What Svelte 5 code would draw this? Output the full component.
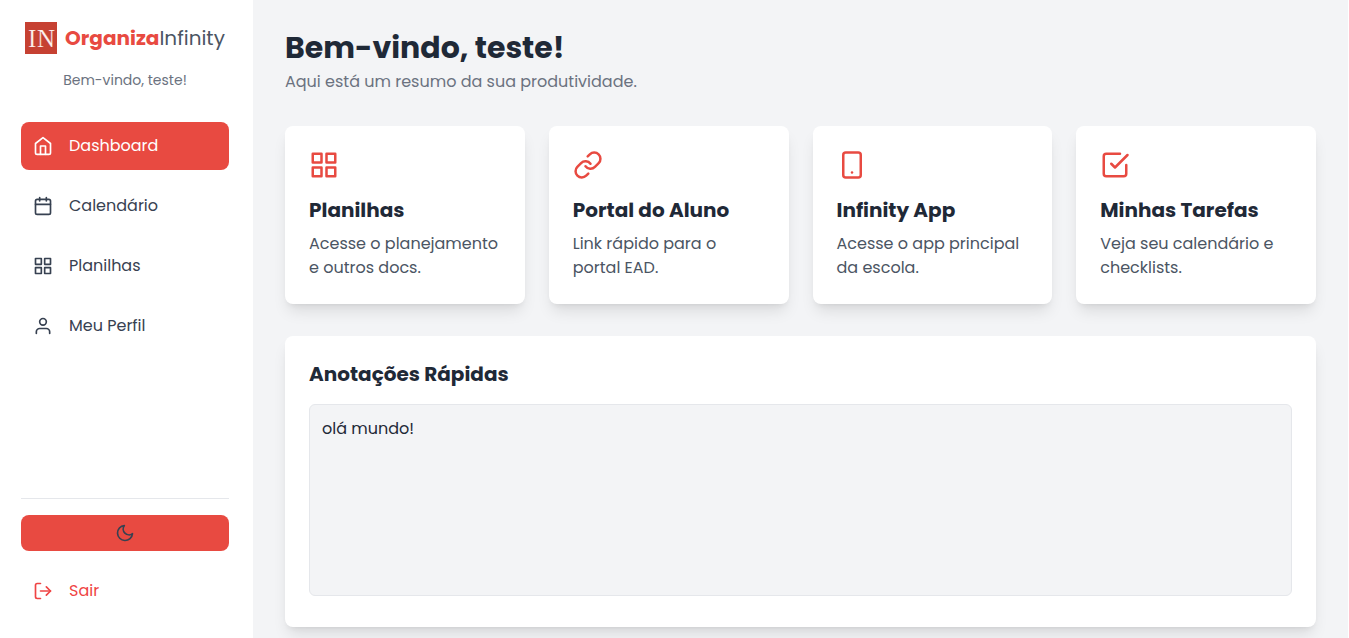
<script>
  const icons = {
    home: '<path d="M3 9l9-7 9 7v11a2 2 0 0 1-2 2H5a2 2 0 0 1-2-2z"/><polyline points="9 22 9 12 15 12 15 22"/>',
    calendar: '<rect x="3" y="4" width="18" height="18" rx="2" ry="2"/><line x1="16" y1="2" x2="16" y2="6"/><line x1="8" y1="2" x2="8" y2="6"/><line x1="3" y1="10" x2="21" y2="10"/>',
    grid: '<rect x="3" y="3" width="7" height="7"/><rect x="14" y="3" width="7" height="7"/><rect x="14" y="14" width="7" height="7"/><rect x="3" y="14" width="7" height="7"/>',
    user: '<path d="M20 21v-2a4 4 0 0 0-4-4H8a4 4 0 0 0-4 4v2"/><circle cx="12" cy="7" r="4"/>',
    moon: '<path d="M21 12.79A9 9 0 1 1 11.21 3 7 7 0 0 0 21 12.79z"/>',
    logout: '<path d="M9 21H5a2 2 0 0 1-2-2V5a2 2 0 0 1 2-2h4"/><polyline points="16 17 21 12 16 7"/><line x1="21" y1="12" x2="9" y2="12"/>',
    link: '<path d="M10 13a5 5 0 0 0 7.54.54l3-3a5 5 0 0 0-7.07-7.07l-1.72 1.71"/><path d="M14 11a5 5 0 0 0-7.54-.54l-3 3a5 5 0 0 0 7.07 7.07l1.71-1.71"/>',
    phone: '<rect x="5" y="2" width="14" height="20" rx="2" ry="2"/><line x1="12" y1="18" x2="12.01" y2="18"/>',
    check: '<polyline points="9 11 12 14 22 4"/><path d="M21 12v7a2 2 0 0 1-2 2H5a2 2 0 0 1-2-2V5a2 2 0 0 1 2-2h11"/>'
  };

  const menu = [
    { label: 'Dashboard', icon: 'home' },
    { label: 'Calendário', icon: 'calendar' },
    { label: 'Planilhas', icon: 'grid' },
    { label: 'Meu Perfil', icon: 'user' }
  ];

  const cards = [
    { title: 'Planilhas', text: 'Acesse o planejamento e outros docs.', icon: 'grid' },
    { title: 'Portal do Aluno', text: 'Link rápido para o portal EAD.', icon: 'link' },
    { title: 'Infinity App', text: 'Acesse o app principal da escola.', icon: 'phone' },
    { title: 'Minhas Tarefas', text: 'Veja seu calendário e checklists.', icon: 'check' }
  ];

  let current = $state('Dashboard');
  let notes = $state('olá mundo!');
</script>

{#snippet icon(name)}
  <svg class="icon" viewBox="0 0 24 24" aria-hidden="true">{@html icons[name]}</svg>
{/snippet}

<div class="layout">
  <aside>
    <div class="brand">
      <svg class="logo" viewBox="0 0 32 32" aria-hidden="true">
        <rect width="32" height="32" fill="#c64132" />
        <text x="3 12" y="25">IN</text>
      </svg>
      <span class="name"><strong>Organiza</strong>Infinity</span>
    </div>
    <p class="hello">Bem-vindo, teste!</p>

    <nav>
      {#each menu as item}
        <a
          href="#{item.icon}"
          class="item"
          class:active={current === item.label}
          onclick={() => (current = item.label)}
        >
          {@render icon(item.icon)}
          <span>{item.label}</span>
        </a>
      {/each}
    </nav>

    <div class="bottom">
      <button class="theme" aria-label="Alternar tema">{@render icon('moon')}</button>
      <button class="item exit">
        {@render icon('logout')}
        <span>Sair</span>
      </button>
    </div>
  </aside>

  <main>
    <header>
      <h1>Bem-vindo, teste!</h1>
      <p>Aqui está um resumo da sua produtividade.</p>
    </header>

    <section class="cards">
      {#each cards as card}
        <a class="card" href="#{card.icon}">
          {@render icon(card.icon)}
          <h2>{card.title}</h2>
          <p>{card.text}</p>
        </a>
      {/each}
    </section>

    <section class="card notes">
      <h2><label for="notes">Anotações Rápidas</label></h2>
      <textarea id="notes" spellcheck="false" bind:value={notes}></textarea>
    </section>
  </main>
</div>

<style>
  :global(body) {
    background: #fff;
  }

  .layout,
  .layout * {
    box-sizing: border-box;
  }

  .layout {
    display: flex;
    height: 100vh;
    padding-right: 1px;
    font-family: Poppins, Inter, sans-serif;
    font-size: 16px;
    line-height: 24px;
    color: #1f2937;
  }

  h1,
  h2,
  p {
    margin: 0;
  }

  a {
    color: inherit;
    text-decoration: none;
  }

  button {
    border: 0;
    background: none;
    font: inherit;
    cursor: pointer;
  }

  .icon {
    flex: none;
    display: block;
    width: 20px;
    height: 20px;
    fill: none;
    stroke: currentColor;
    stroke-width: 2;
    stroke-linecap: round;
    stroke-linejoin: round;
  }

  aside {
    flex: none;
    display: flex;
    flex-direction: column;
    width: 253px;
    padding: 22px 24px 23px 21px;
    background: #fff;
    color: #374151;
  }

  .brand {
    display: flex;
    align-items: center;
    justify-content: center;
    gap: 8px;
  }

  .logo {
    flex: none;
    width: 32px;
    height: 32px;
  }

  .logo text {
    font-family: "Liberation Serif", serif;
    font-size: 25px;
    fill: #fdf0ee;
    stroke: #c64132;
    stroke-width: 0.2;
  }

  .name {
    font-size: 20px;
    line-height: 28px;
    color: #4b5563;
    white-space: nowrap;
  }

  .name strong {
    font-weight: 700;
    color: #e84a41;
  }

  .hello {
    margin-top: 16px;
    font-size: 14px;
    line-height: 20px;
    text-align: center;
    color: #6b7280;
  }

  nav {
    display: flex;
    flex-direction: column;
    gap: 12px;
    margin-top: 32px;
  }

  .item {
    display: flex;
    align-items: center;
    gap: 16px;
    width: 100%;
    padding: 12px;
    border-radius: 8px;
  }

  .active {
    background: #e84a41;
    color: #fff;
  }

  .bottom {
    display: flex;
    flex-direction: column;
    gap: 16px;
    margin-top: auto;
    padding-top: 16px;
    border-top: 1px solid #e5e7eb;
  }

  .theme {
    display: flex;
    justify-content: center;
    padding: 8px;
    border-radius: 8px;
    background: #e84a41;
    color: #374151;
  }

  .exit {
    color: #ef4444;
  }

  main {
    flex: 1;
    min-width: 0;
    padding: 30px 32px;
    overflow-y: auto;
    scrollbar-width: none;
    background: #f3f4f6;
  }

  h1 {
    font-size: 30px;
    line-height: 36px;
    font-weight: 700;
  }

  header p {
    margin-top: 4px;
    color: #6b7280;
  }

  .cards {
    display: grid;
    grid-template-columns: repeat(4, minmax(0, 1fr));
    gap: 24px;
    margin: 32px 0;
  }

  .card {
    padding: 24px;
    border-radius: 8px;
    background: #fff;
    box-shadow:
      0 10px 15px -3px rgba(0, 0, 0, 0.1),
      0 4px 6px -4px rgba(0, 0, 0, 0.1);
  }

  .card .icon {
    width: 30px;
    height: 30px;
    margin-bottom: 16px;
    color: #e84a41;
  }

  h2 {
    font-size: 20px;
    line-height: 28px;
    font-weight: 700;
  }

  .card p {
    margin-top: 8px;
    color: #4b5563;
  }

  .notes {
    padding-bottom: 31px;
  }

  textarea {
    display: block;
    width: 100%;
    height: 192px;
    margin-top: 16px;
    padding: 12px;
    border: 1px solid #e5e7eb;
    border-radius: 6px;
    background: #f3f4f6;
    font: inherit;
    color: inherit;
    resize: none;
    outline: none;
  }
</style>
